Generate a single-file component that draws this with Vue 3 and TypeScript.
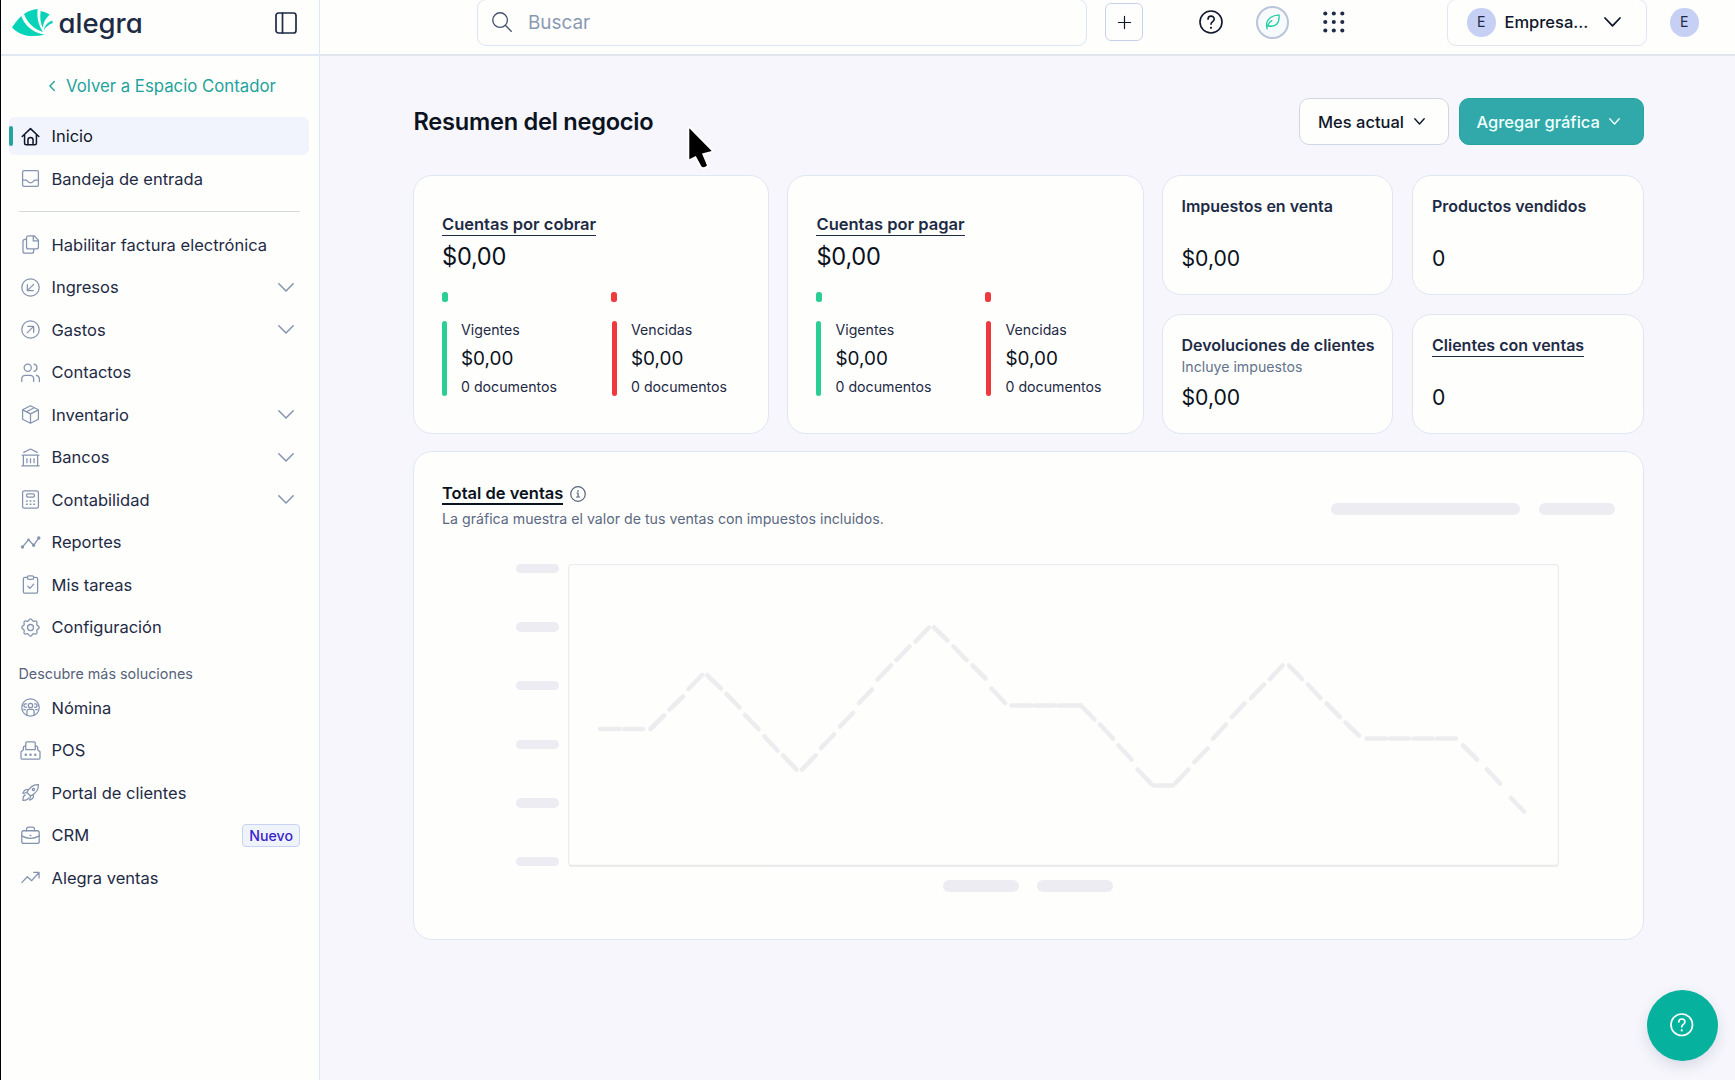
<script setup lang="ts">
interface NavItem {
  label: string
  icon: string
  active?: boolean
  expandable?: boolean
  badge?: string
}

const icons: Record<string, string> = {
  home: '<path d="M1.5 12 12 2l10.500 10M4.500 9.500V20.500a2 2 0 0 0 2 2h11a2 2 0 0 0 2-2V9.500M8.800 22.300v-5.800a3.200 3.200 0 0 1 6.400 0v5.800"/>',
  inbox: '<rect x="2" y="2" width="20" height="20" rx="1.800"/><path d="M2 14h4.500c1.500 0 1.500 3.500 5.500 3.500s4-3.500 5.500-3.500H22"/>',
  files: '<path d="M9.500 1h7L22 6.500V15a2.500 2.500 0 0 1-2.500 2.500h-10A2.500 2.500 0 0 1 7 15V3.500A2.500 2.500 0 0 1 9.500 1ZM15.500 1v6.500H22M7 5.500H5A2.500 2.500 0 0 0 2.500 8v12.500A2.500 2.500 0 0 0 5 23h8.500a2.500 2.500 0 0 0 2.500-2.500v-3"/>',
  arrowIn: '<circle cx="12" cy="12" r="11"/><path d="M16 8l-8 8M8 8.500V16h7.500"/>',
  arrowOut: '<circle cx="12" cy="12" r="11"/><path d="M8 16l8-8M8.500 8H16v7.500"/>',
  users: '<circle cx="8.500" cy="6" r="4.500"/><path d="M1 23.500V20a4.500 4.500 0 0 1 4.500-4.500h6A4.500 4.500 0 0 1 16 20v3.500M16.500 1.500a4.600 4.600 0 0 1 0 9M19.500 15.500c2.300.6 3.700 2.500 3.700 4.800v3.200"/>',
  box: '<path d="M12 1l10 5v12l-10 5-10-5V6ZM2 6.200l10 5 10-5M12 11.200v11.800M7 8.500l9.500-5"/>',
  bank: '<path d="M3.500 5.500 12 1.300l8.500 4.200M1.500 9h21M1 22.500h22M3 9v13.500M21 9v13.500M7.500 13.500v5M12 13.500v5M16.500 13.500v5"/>',
  calculator: '<rect x="2" y="1" width="20" height="22" rx="2.200"/><rect x="7" y="5" width="10" height="4" rx="1.800"/><path d="M7 13.800h.8M11.600 13.800h.8M16.200 13.800h.8M7 18h.8M11.600 18h.8M16.200 18h.8" stroke-width="2"/>',
  report: '<path d="M2 17.500 9.500 8.500l6.500 7L22.300 6.500"/><g fill="currentColor"><circle cx="1.800" cy="17.700" r="1.300"/><circle cx="9.500" cy="8.600" r=".8"/><circle cx="16" cy="15.500" r="1.300"/><circle cx="22.500" cy="6.300" r="1.300"/></g>',
  tasks: '<path d="M8 3H5a2 2 0 0 0-2 2v16a2 2 0 0 0 2 2h14a2 2 0 0 0 2-2V5a2 2 0 0 0-2-2h-3"/><rect x="8" y="1" width="8" height="4.500" rx="2"/><path d="M8.500 14l2.800 2.800L16 11.500"/>',
  gear: '<circle cx="12" cy="12" r="3.800"/><path d="M12 1c1.900 0 1.900 2.400 3.400 3s3.100-1.100 4.400.2-.4 3 .2 4.400S23 10.100 23 12s-2.400 1.900-3 3.400 1.100 3.100-.2 4.400-3-.4-4.400.2S13.900 23 12 23s-1.900-2.400-3.400-3-3.100 1.100-4.400-.2.400-3-.2-4.400S1 13.900 1 12s2.400-1.900 3-3.400S2.900 5.500 4.200 4.200s3 .4 4.400-.2S10.100 1 12 1Z"/>',
  payroll: '<circle cx="12" cy="12" r="11"/><circle cx="12" cy="9.500" r="2.800"/><path d="M7.500 22v-5a2.500 2.500 0 0 1 2.500-2.500h4a2.500 2.500 0 0 1 2.500 2.500v5M6.800 7.500a2.200 2.200 0 1 0 0 4M17.200 7.500a2.200 2.200 0 1 1 0 4M3.500 14.800h2M18.500 14.800h2"/>',
  pos: '<path d="M6 11V2.500A1.500 1.500 0 0 1 7.500 1h9A1.500 1.500 0 0 1 18 2.500V11ZM6 6.500H4.500A1.500 1.500 0 0 0 3 8v3l-3 2.500V21a2 2 0 0 0 2 2h20a2 2 0 0 0 2-2v-7.500L21 11V8a1.500 1.500 0 0 0-1.500-1.500H18"/><path d="M6 17.300h.1M12 17.300h.1M18 17.300h.1" stroke-width="3"/>',
  rocket: '<path d="M7.500 12C11 5 15.500 1.500 22 2c.5 6.500-3 11-10 14.500ZM9 8.500C5.500 7.500 3.500 9.500 2.500 13l5-1M15.500 15c1 3.500-1 5.500-4.500 6.500l1-5M5.500 15c-2.500 1-3.200 3.500-3 7 3.500.2 6-.5 7-3"/><circle cx="15.700" cy="8.300" r="1.400"/>',
  briefcase: '<rect x="1" y="6" width="22" height="16" rx="2.500"/><path d="M7 6V4a2.500 2.500 0 0 1 2.500-2.500h5A2.500 2.500 0 0 1 17 4v2M1 12.500c7 4 15 4 22 0M11.500 12h1"/>',
  trend: '<path d="M1 18.500l7-7.500 5.500 5L22.500 6M16 5.500h6.800V12.500"/>',
}

const topItems: NavItem[] = [
  { label: 'Inicio', icon: 'home', active: true },
  { label: 'Bandeja de entrada', icon: 'inbox' },
]

const mainItems: NavItem[] = [
  { label: 'Habilitar factura electrónica', icon: 'files' },
  { label: 'Ingresos', icon: 'arrowIn', expandable: true },
  { label: 'Gastos', icon: 'arrowOut', expandable: true },
  { label: 'Contactos', icon: 'users' },
  { label: 'Inventario', icon: 'box', expandable: true },
  { label: 'Bancos', icon: 'bank', expandable: true },
  { label: 'Contabilidad', icon: 'calculator', expandable: true },
  { label: 'Reportes', icon: 'report' },
  { label: 'Mis tareas', icon: 'tasks' },
  { label: 'Configuración', icon: 'gear' },
]

const moreItems: NavItem[] = [
  { label: 'Nómina', icon: 'payroll' },
  { label: 'POS', icon: 'pos' },
  { label: 'Portal de clientes', icon: 'rocket' },
  { label: 'CRM', icon: 'briefcase', badge: 'Nuevo' },
  { label: 'Alegra ventas', icon: 'trend' },
]

const navGroups = [
  { key: 'top', title: '', items: topItems },
  { key: 'main', title: '', items: mainItems },
  { key: 'more', title: 'Descubre más soluciones', items: moreItems },
]

const accounts = ['Cuentas por cobrar', 'Cuentas por pagar']
const buckets = [
  { label: 'Vigentes', tone: 'ok' },
  { label: 'Vencidas', tone: 'late' },
]

const metrics = [
  { title: 'Impuestos en venta', note: '', value: '$0,00', link: false },
  { title: 'Productos vendidos', note: '', value: '0', link: false },
  { title: 'Devoluciones de clientes', note: 'Incluye impuestos', value: '$0,00', link: false },
  { title: 'Clientes con ventas', note: '', value: '0', link: true },
]

// Dashes of the empty-state trend line: x1, y1, x2, y2
const dashes: number[][] = [
  [32, 165, 51.5, 165], [56, 165, 75, 165],
  [82.5, 165, 96, 151.5], [101.500, 145.500, 115, 132.500], [120.500, 125, 134, 111],
  [139, 111, 153, 124.500], [158.500, 130, 171.500, 143.500], [177, 151, 190.500, 165],
  [196.500, 172.500, 209.500, 186.500], [215, 191.500, 228.500, 205.500],
  [234, 205.500, 247.500, 191.500], [253, 184, 266, 170.500], [272, 162.500, 285, 149],
  [291, 139, 304, 125.500], [309.500, 115.500, 323, 101.500], [328.500, 96, 341.500, 82.500],
  [347.500, 77.500, 361, 63.500], [366, 63.500, 379.500, 76.500], [385.500, 82.500, 398.500, 96],
  [404.500, 101.500, 417.500, 114.500], [423.500, 124.500, 437, 139],
  [443.500, 141.500, 463, 141.500], [467, 141.500, 486.500, 141.500], [490.500, 141.500, 513, 141.500],
  [513, 141.500, 526.500, 155.500], [532, 160.500, 545, 174.500], [550.500, 181.500, 563.500, 195.500],
  [569.500, 205.500, 583, 219.500], [585.500, 221.500, 605, 221.500],
  [607.500, 219, 620.500, 205.500], [626.500, 198, 639.500, 184.500], [645, 174.500, 658, 160.500],
  [664, 153, 676.500, 139.500], [683, 134, 696, 120.500], [702, 115, 714.500, 101.500],
  [721, 101.500, 734, 115], [740, 120.500, 752.500, 134], [758.500, 139.500, 772, 153],
  [777.500, 158.500, 791, 171.500],
  [798.500, 174.500, 818, 174.500], [822, 174.500, 841, 174.500],
  [845.500, 174.500, 864.500, 174.500], [869, 174.500, 888, 174.500],
  [895, 181.500, 909, 195.500], [919, 205.500, 932, 219.500], [943, 234, 956, 247.500],
]
</script>

<template>
  <div class="app">
    <aside class="sidebar">
      <div class="brand">
        <svg class="brand-mark" viewBox="0 0 123 82" fill="#06d3b7">
          <path d="M0 55C9 42 18 31 28 21C36 45 57 70 98 77C58 86 22 80 0 55Z" />
          <path d="M36 15C50 5 63 1 77 0C74 25 79 48 93 69C66 61 47 42 36 15Z" />
          <path d="M86 6Q99 8 113 16Q95 32 92 56Q82 34 86 6Z" />
          <path d="M120 34L123 42Q106 47 95 64Q99 42 120 34Z" />
        </svg>
        <span class="brand-name">alegra</span>
        <svg class="panel-toggle" viewBox="0 0 22 22">
          <rect x="1" y="1" width="20" height="20" rx="2.500" /><path d="M7.500 1v20" />
        </svg>
      </div>

      <a class="back">
        <svg viewBox="0 0 6 10"><path d="M5.300.5.900 5l4.400 4.500" /></svg>
        <span>Volver a Espacio Contador</span>
      </a>

      <nav v-for="group in navGroups" :key="group.key" :class="['group', group.key]">
        <h2 v-if="group.title">{{ group.title }}</h2>
        <a v-for="item in group.items" :key="item.label" :class="['item', { active: item.active }]">
          <svg class="item-icon" viewBox="0 0 24 24" v-html="icons[item.icon]" />
          <span class="item-label">{{ item.label }}</span>
          <svg v-if="item.expandable" class="chevron" viewBox="0 0 16 9"><path d="M.8.8 8 8 15.200.8" /></svg>
          <span v-if="item.badge" class="badge">{{ item.badge }}</span>
        </a>
      </nav>
    </aside>

    <div class="page">
      <header class="topbar">
        <div class="search">
          <svg viewBox="0 0 21 21"><circle cx="8.500" cy="8.500" r="7.700" /><path d="M14 14l6.200 6.200" /></svg>
          <span>Buscar</span>
        </div>
        <button class="add"><svg viewBox="0 0 14 14"><path d="M7 .5v13M.5 7h13" /></svg></button>
        <svg class="help" viewBox="0 0 24 24">
          <circle cx="12" cy="12" r="11" />
          <path d="M9 9.300c0-4.200 6.200-4.200 6.200-.2 0 2.600-3.200 2.500-3.200 5.200" />
          <circle class="dot" cx="12" cy="17.800" r="1.100" />
        </svg>
        <span class="leaf">
          <svg viewBox="0 0 16 17"><path d="M2.300 15.800C1 11 2 6.500 6 3.700 8.500 1.900 11.500 1.300 15 1c.3 4-.2 7.500-2.300 9.700-2.500 2.700-6.200 2.700-9.800 1.800M2.500 13C3.500 10 5 8.200 7.300 7" /></svg>
        </span>
        <svg class="apps" viewBox="0 0 22 22">
          <template v-for="row in 3" :key="row">
            <circle v-for="col in 3" :key="col" :cx="2.300 + (col - 1) * 8.500" :cy="2.500 + (row - 1) * 8.500" r="2.050" />
          </template>
        </svg>
        <div class="company">
          <span class="avatar">E</span>
          <span class="company-name">Empresa...</span>
          <svg viewBox="0 0 17 10"><path d="M1 1l7.500 7.800L16 1" /></svg>
        </div>
        <span class="avatar">E</span>
      </header>

      <main class="content">
        <div class="heading">
          <h1>Resumen del negocio</h1>
          <button class="btn">Mes actual <svg viewBox="0 0 11 7"><path d="M.8.800 5.500 6 10.200.800" /></svg></button>
          <button class="btn primary">Agregar gráfica <svg viewBox="0 0 11 7"><path d="M.8.800 5.500 6 10.200.800" /></svg></button>
        </div>

        <section class="summary">
          <article v-for="name in accounts" :key="name" class="card account">
            <h3 class="link">{{ name }}</h3>
            <p class="amount">$0,00</p>
            <div class="pills"><i class="ok" /><i class="late" /></div>
            <div class="buckets">
              <div v-for="b in buckets" :key="b.label" class="bucket">
                <i :class="b.tone" />
                <div class="bucket-text">
                  <span>{{ b.label }}</span>
                  <strong>$0,00</strong>
                  <span>0 documentos</span>
                </div>
              </div>
            </div>
          </article>
          <div class="metrics">
            <article v-for="m in metrics" :key="m.title" class="card metric">
              <h3 :class="{ link: m.link }">{{ m.title }}</h3>
              <p class="note">{{ m.note }}</p>
              <p class="value">{{ m.value }}</p>
            </article>
          </div>
        </section>

        <section class="card sales">
          <div class="sales-head">
            <div>
              <div class="sales-title">
                <h3 class="link">Total de ventas</h3>
                <svg viewBox="0 0 16 16"><circle cx="8" cy="8" r="7.300" /><path d="M7 7h1.100v4M6.600 11h3M8 4.500v.9" /></svg>
              </div>
              <p>La gráfica muestra el valor de tus ventas con impuestos incluidos.</p>
            </div>
            <div class="head-bones"><i class="bone wide" /><i class="bone" /></div>
          </div>
          <div class="plot-row">
            <div class="ticks"><i v-for="n in 6" :key="n" /></div>
            <svg class="plot" viewBox="0 0 991 303">
              <rect class="frame" x=".7" y=".7" width="989.600" height="301" rx="3" />
              <path class="base" d="M2 301.700H989" />
              <line v-for="(d, i) in dashes" :key="i" :x1="d[0]" :y1="d[1]" :x2="d[2]" :y2="d[3]" />
            </svg>
          </div>
          <div class="legend"><i class="bone" /><i class="bone" /></div>
        </section>
      </main>
    </div>

    <button class="fab">
      <svg viewBox="0 0 24 24">
        <circle cx="12" cy="12" r="11" />
        <path d="M9 9.300c0-4.200 6.200-4.200 6.200-.2 0 2.600-3.200 2.500-3.200 5.200" />
        <circle class="dot" cx="12" cy="17.800" r="1.100" />
      </svg>
    </button>
    <svg class="cursor" viewBox="0 0 28 46">
      <path d="M3.300 3.300V34.300L9.800 31 15.500 41.500Q18 43.500 21 40.500L16 28.500 25.700 26Z" />
    </svg>
  </div>
</template>

<style>
html,
body {
  margin: 0;
  overflow: hidden;
}
</style>

<style scoped>
.app {
  box-sizing: border-box;
  position: relative;
  display: flex;
  width: 1735px;
  height: 1080px;
  overflow: hidden;
  border-left: 1px solid #000;
  background: #f6f6fc;
  color: #1e2b45;
  font-family: Inter, "Liberation Sans", sans-serif;
  font-size: 16.5px;
}
.app *,
.app *::before {
  box-sizing: border-box;
}
h1, h2, h3, p { margin: 0; }
button { font: inherit; padding: 0; }
svg {
  display: block;
  flex: none;
  fill: none;
  stroke: currentColor;
  stroke-linecap: round;
  stroke-linejoin: round;
  overflow: visible;
}

.sidebar {
  width: 319px;
  flex: none;
  background: #fefefd;
  border-right: 1.500px solid #e0e8f4;
}
.brand {
  display: flex;
  align-items: center;
  height: 56px;
  padding: 0 22.500px 8.500px 11px;
  border-bottom: 2px solid #e0e8f3;
}
.brand-mark {
  width: 41px;
  height: 27.500px;
  fill: #06d3b7;
  stroke: none;
}
.brand-name {
  margin-left: 5.500px;
  width: 216px;
  font-size: 27.500px;
  font-weight: 500;
  line-height: 30px;
  font-feature-settings: "cv11", "ss03";
}
.panel-toggle {
  width: 22px;
  height: 22px;
  stroke-width: 1.700;
}
.back {
  display: flex;
  align-items: center;
  gap: 11px;
  height: 61px;
  padding: 0 0 1px 48px;
  color: #1fa39c;
  font-size: 16.750px;
}
.back svg { width: 6px; height: 10px; stroke-width: 1.300; }
.group { padding: 0 10px 0 8px; }
.group.main {
  margin: 0;
  padding-top: 9px;
}
.group.main::before {
  content: "";
  display: block;
  height: 1px;
  margin: 0 9px 13.500px 10px;
  background: #d6dadf;
}
.group h2 {
  height: 38px;
  padding: 13.500px 0 0 9.500px;
  font-size: 14.350px;
  font-weight: 400;
  line-height: 20px;
  color: #56637a;
}
.item {
  position: relative;
  display: flex;
  align-items: center;
  height: 38px;
  margin-bottom: 4.500px;
  padding: 0 9px 0 12px;
  border-radius: 6px;
}
.item.active { background: #f2f4fd; color: #0f172a; }
.item.active::before {
  content: "";
  position: absolute;
  left: 0;
  top: 9px;
  width: 4px;
  height: 20px;
  border-radius: 2px;
  background: #23a59e;
}
.item-icon {
  width: 19px;
  height: 19px;
  color: #8493ae;
  stroke-width: 1.600;
}
.active .item-icon { color: #0f172a; stroke-width: 1.900; }
.item-label { flex: 1; margin-left: 11.500px; white-space: nowrap; }
.chevron { width: 16px; height: 9px; margin-right: 6.500px; color: #8493ae; stroke-width: 1.500; }
.badge {
  height: 23px;
  padding: 0 6px;
  border: 1.200px solid #c8d2f2;
  border-radius: 4px;
  background: #eff3fa;
  color: #3a25cf;
  font-size: 14.160px;
  font-weight: 500;
  line-height: 21px;
}

.page { flex: 1; min-width: 0; }
.topbar {
  display: flex;
  align-items: center;
  height: 56px;
  padding: 0 36.500px 9.500px 157px;
  border-bottom: 2px solid #e2e7ef;
  background: #fefefd;
  color: #0f172a;
}
.search {
  display: flex;
  align-items: center;
  width: 610px;
  height: 47px;
  flex: none;
  padding-left: 14px;
  border: 1px solid #dce5f2;
  border-radius: 9px;
  color: #8b99b2;
  font-size: 18.900px;
}
.search svg { width: 20px; height: 20px; margin-right: 16px; color: #44526b; stroke-width: 1.400; }
.add {
  display: flex;
  align-items: center;
  justify-content: center;
  width: 38px;
  height: 38px;
  flex: none;
  margin-left: 18px;
  border: 1.300px solid #c9d2ec;
  border-radius: 6px;
  background: none;
  color: #0f172a;
}
.add svg { width: 13px; height: 13px; stroke-width: 1.300; }
.help { width: 24px; height: 24px; margin-left: 55.500px; stroke-width: 1.600; }
.dot { fill: currentColor; stroke: none; }
.leaf {
  display: flex;
  align-items: center;
  justify-content: center;
  width: 33px;
  height: 33px;
  flex: none;
  margin-left: 33px;
  border: 2.500px solid #bac5da;
  border-radius: 50%;
  background: #f7fafa;
  color: #1fcfa4;
}
.leaf svg { width: 15px; height: 16px; stroke-width: 1.400; }
.apps { width: 22px; height: 22px; margin-left: 34px; fill: #1e2b45; stroke: none; }
.company {
  display: flex;
  align-items: center;
  width: 200px;
  height: 47px;
  flex: none;
  margin-left: auto;
  margin-right: 23px;
  padding-left: 19px;
  border: 1px solid #e0e6f2;
  border-radius: 9px;
}
.company-name { width: 99.500px; margin-left: 9px; font-weight: 500; }
.company svg { width: 17px; height: 10px; stroke-width: 1.800; }
.avatar {
  width: 28.500px;
  height: 28.500px;
  flex: none;
  border-radius: 50%;
  background: #c6d0f5;
  color: #1e2b45;
  font-size: 14.160px;
  line-height: 28.500px;
  text-align: center;
}

.content { width: 1230.500px; margin-left: 93px; }
.heading {
  display: flex;
  align-items: center;
  gap: 10px;
  height: 47px;
  margin-top: 42px;
}
h1 {
  flex: 1;
  padding-left: .5px;
  font-size: 23.600px;
  font-weight: 600;
  letter-spacing: -.25px;
  color: #0b1220;
}
.btn {
  display: flex;
  align-items: center;
  gap: 9.500px;
  width: 150px;
  height: 47px;
  padding-left: 18.500px;
  border: 1.300px solid #cfd7e5;
  border-radius: 10px;
  background: #fefefd;
  color: #0f172a;
  font-weight: 500;
}
.btn svg { width: 11px; height: 7px; stroke-width: 1.400; }
.btn.primary { width: 185px; padding-left: 17px; border-color: #27a3a1; background: #31a9aa; color: #eefffc; }

.card {
  border: 1.300px solid #dfe8f2;
  border-radius: 19px;
  background: #fefefd;
}
.summary {
  display: flex;
  gap: 18.300px;
  height: 259px;
  margin-top: 30px;
}
h3 { font-size: 16.500px; font-weight: 600; line-height: 20px; white-space: nowrap; }
.link { width: max-content; border-bottom: 1.500px solid currentColor; }
.account { width: 356.200px; flex: none; padding: 38px 28px 0; }
.account h3 { height: 22px; }
.amount { margin-top: 6px; font-size: 23.600px; line-height: 30px; letter-spacing: -.25px; color: #0b1220; }
.ok { background: #2bcf95; }
.late { background: #ef3a3d; }
.pills { display: flex; gap: 163px; margin-top: 20px; }
.pills i { width: 6px; height: 10px; border-radius: 2.500px; }
.buckets { display: flex; gap: 0; margin-top: 19px; }
.bucket { display: flex; width: 170px; flex: none; }
.bucket > i { width: 5px; height: 75px; border-radius: 2.500px; }
.bucket-text { display: flex; flex-direction: column; margin-left: 14px; font-size: 14.160px; line-height: 18px; }
.bucket-text strong { margin: 8px 0 7px; font-size: 18.900px; font-weight: 400; line-height: 24px; color: #0b1220; }

.metrics {
  display: grid;
  flex: 1;
  grid-template-columns: 1fr 1fr;
  grid-template-rows: 120px 120.500px;
  gap: 18.500px 19.500px;
}
.metric { padding: 20px 0 0 18.500px; }
.metric h3 { height: 22px; font-size: 16px; }
.note { height: 18px; margin-top: 1.500px; font-size: 14.160px; line-height: 18px; color: #64748b; }
.value { margin-top: 6.500px; font-size: 21.200px; line-height: 28px; color: #0b1220; }

.sales { height: 489px; margin-top: 17px; padding: 30.500px 28px 0; }
.sales-head { display: flex; justify-content: space-between; height: 81px; }
.sales-title { display: flex; align-items: center; gap: 7px; }
.sales-title h3 { height: 22px; color: #0b1220; border-bottom-width: 2px; }
.sales-title svg { width: 16px; height: 16px; margin-top: 1px; color: #56637a; stroke-width: 1.200; }
.sales-head p { margin-top: 5px; font-size: 14.180px; line-height: 18px; color: #5b6982; }
.head-bones { display: flex; gap: 19px; margin-top: 20.500px; }
.bone { width: 76px; height: 12px; border-radius: 6px; background: #edecf2; }
.bone.wide { width: 189px; }
.plot-row { display: flex; gap: 9px; margin-left: 74px; }
.ticks { display: flex; flex-direction: column; justify-content: space-between; width: 43px; height: 303px; }
.ticks i { height: 9.500px; border-radius: 5px; background: #edecf2; }
.plot { width: 991px; height: 303px; stroke: #ededf0; stroke-width: 4.600; }
.frame { stroke: #ecedf3; stroke-width: 1.300; }
.base { stroke: #eaeaec; stroke-width: 2; }
.legend { display: flex; gap: 18.500px; margin: 13px 0 0 500.500px; }

.fab {
  position: absolute;
  right: 17.500px;
  bottom: 19px;
  display: flex;
  align-items: center;
  justify-content: center;
  width: 71px;
  height: 71px;
  border: 0;
  border-radius: 50%;
  background: #06b29e;
  color: #fff;
  box-shadow: 0 5px 14px rgba(40, 50, 90, 0.14);
}
.fab svg { width: 23.500px; height: 23.500px; margin-top: -2px; stroke-width: 1.700; }
.cursor {
  position: absolute;
  left: 684.500px;
  top: 125px;
  width: 28px;
  height: 46px;
  fill: #000;
  stroke: #fefefd;
  stroke-width: 3.500;
  paint-order: stroke;
}
</style>
